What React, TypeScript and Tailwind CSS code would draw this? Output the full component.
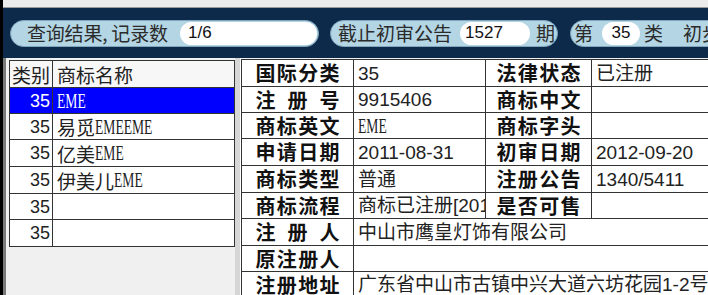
import React from "react";

const cjk = { fontFamily: '"Noto Sans CJK SC", "Noto Sans", sans-serif' };
const val = { fontFamily: '"Liberation Sans", "Noto Sans CJK SC", sans-serif' };
const eme = { fontFamily: '"Liberation Serif", serif' };

// 行高，逐行对齐参考图里的格线
const H = ["h-[27px]", "h-[26px]", "h-[26px]", "h-[27px]", "h-[27px]", "h-[26px]", "h-[27px]", "h-[26px]", "h-[26px]"];

type Item = { cls: string; cn: string; en: string };

const items: Item[] = [
  { cls: "35", cn: "", en: "EME" },
  { cls: "35", cn: "易觅", en: "EMEEME" },
  { cls: "35", cn: "亿美", en: "EME" },
  { cls: "35", cn: "伊美儿", en: "EME" },
  { cls: "35", cn: "", en: "" },
  { cls: "35", cn: "", en: "" },
];

// 英文商标名在原界面里是窄体点阵字，这里用衬线字横向压窄
function Eme({ text }: { text: string }) {
  return (
    <span className="inline-block origin-left scale-x-[0.68] text-[20px] leading-none" style={eme}>
      {text}
    </span>
  );
}

type Row = { l: string; v: React.ReactNode; l2?: string; v2?: React.ReactNode };

const rows: Row[] = [
  { l: "国际分类", v: "35", l2: "法律状态", v2: "已注册" },
  { l: "注册号", v: "9915406", l2: "商标中文", v2: "" },
  { l: "商标英文", v: <Eme text="EME" />, l2: "商标字头", v2: "" },
  { l: "申请日期", v: "2011-08-31", l2: "初审日期", v2: "2012-09-20" },
  { l: "商标类型", v: "普通", l2: "注册公告", v2: "1340/5411" },
  { l: "商标流程", v: "商标已注册[2013", l2: "是否可售", v2: "" },
  { l: "注册人", v: "中山市鹰皇灯饰有限公司" },
  { l: "原注册人", v: "" },
  { l: "注册地址", v: "广东省中山市古镇中兴大道六坊花园1-2号" },
];

function Label({ text }: { text: string }) {
  return (
    <div className="mx-auto flex w-[84px] justify-between text-[20px] font-bold leading-none text-[#111]" style={cjk}>
      {text.split("").map((c, i) => (
        <span key={i}>{c}</span>
      ))}
    </div>
  );
}

function Pill({ children, className }: { children: React.ReactNode; className: string }) {
  return (
    <div
      className={`flex h-[27px] shrink-0 items-center rounded-full border border-[#7fa6bd] bg-[#b3d5e4] text-[#2b2b2b] ${className}`}
      style={cjk}
    >
      {children}
    </div>
  );
}

function Field({ text, className }: { text: string; className: string }) {
  return (
    <div className={`flex h-[23px] shrink-0 items-center rounded-full bg-white text-[17px] text-[#111] ${className}`} style={val}>
      {text}
    </div>
  );
}

export default function App() {
  return (
    <div className="flex h-[295px] w-[708px] overflow-hidden bg-[#f0f0f0]">
      <div className="w-[3px] shrink-0 bg-black" />
      <div className="flex min-w-0 flex-1 flex-col">
        <div className="h-[8px] shrink-0 border-b border-[#9a9a9a] bg-[#ececec]" />
        <div className="flex h-[50px] shrink-0 items-center overflow-hidden bg-[#0d2a4b] pl-[7px]">
          <Pill className="w-[309px] pl-[16px] pr-[1px]">
            <span className="whitespace-nowrap text-[19px] tracking-[-0.2px]">查询结果, 记录数</span>
            <Field text="1/6" className="ml-auto w-[137px] pl-[8px]" />
          </Pill>
          <Pill className="ml-[11px] w-[228px] pl-[7px]">
            <span className="text-[19px]">截止初审公告</span>
            <Field text="1527" className="ml-[8px] w-[70px] pl-[5px]" />
            <span className="ml-[6px] text-[19px]">期</span>
          </Pill>
          <Pill className="ml-[12px] w-[180px] pl-[3px]">
            <span className="text-[19px]">第</span>
            <Field text="35" className="ml-[9px] w-[38px] justify-center" />
            <span className="ml-[4px] text-[19px]">类</span>
            <span className="ml-[20px] whitespace-nowrap text-[19px]">初步审定</span>
          </Pill>
        </div>

        <div className="flex min-h-0 flex-1">
          {/* 左侧结果列表 */}
          <div className="w-[3px] shrink-0 bg-[#7a7a7a]" />
          <div className="w-[229px] shrink-0 pl-[3px] pt-[2px]">
            <div className="w-[226px] border border-b-0 border-[#333]" style={cjk}>
              <div className={`flex ${H[0]} border-b border-[#333] bg-[#f7f7f7] text-[19px] leading-none text-[#222]`}>
                <div className="flex w-[43px] items-center border-r border-[#333] pl-[2px]">类别</div>
                <div className="flex flex-1 items-center pl-[4px]">商标名称</div>
              </div>
              {items.map((it, i) => (
                <div
                  key={i}
                  className={`flex ${H[i + 1]} border-b border-[#333] text-[18px] leading-none ${
                    i === 0 ? "bg-[#0000ff] text-white" : "bg-white text-[#222]"
                  }`}
                >
                  <div className="flex w-[43px] items-center justify-end border-r border-[#333] pr-[2px]" style={val}>
                    {it.cls}
                  </div>
                  <div className="flex flex-1 items-center whitespace-nowrap pl-[4px]">
                    {it.cn && <span className="text-[19px]">{it.cn}</span>}
                    {it.en && <Eme text={it.en} />}
                  </div>
                </div>
              ))}
            </div>
          </div>

          {/* 分隔条 */}
          <div className="flex w-[6px] shrink-0 justify-end bg-[#d6d6d6]">
            <div className="w-px bg-white" />
          </div>

          {/* 右侧详情 */}
          <div className="min-w-0 flex-1 overflow-hidden pt-[1px]">
            <div className="w-[520px] border-l border-t border-[#333] bg-white">
              {rows.map((r, i) => (
                <div key={i} className={`flex ${H[i]} border-b border-[#333]`}>
                  <div className="flex w-[112px] shrink-0 items-center border-r border-[#333]">
                    <Label text={r.l} />
                  </div>
                  {r.l2 !== undefined ? (
                    <>
                      <div
                        className="flex w-[132px] shrink-0 items-center overflow-hidden whitespace-nowrap border-r border-[#333] pl-[4px] text-[19px] leading-none text-[#222]"
                        style={val}
                      >
                        {r.v}
                      </div>
                      <div className="flex w-[106px] shrink-0 items-center border-r border-[#333]">
                        <Label text={r.l2} />
                      </div>
                      <div
                        className="flex flex-1 items-center whitespace-nowrap pl-[4px] text-[19px] leading-none text-[#222]"
                        style={val}
                      >
                        {r.v2}
                      </div>
                    </>
                  ) : (
                    <div
                      className="flex flex-1 items-center whitespace-nowrap pl-[4px] text-[19px] leading-none text-[#222]"
                      style={val}
                    >
                      {r.v}
                    </div>
                  )}
                </div>
              ))}
            </div>
          </div>
        </div>
      </div>
    </div>
  );
}
